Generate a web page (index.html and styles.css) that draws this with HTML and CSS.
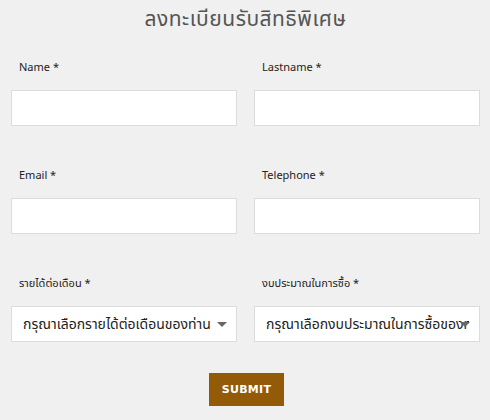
FILE: index.html
```html
<!DOCTYPE html>
<html lang="th">
<head>
<meta charset="utf-8">
<link rel="stylesheet" href="styles.css">
</head>
<body>
<div class="page">
  <h1 class="title">ลงทะเบียนรับสิทธิพิเศษ</h1>
  <form class="form">
    <div class="field">
      <label class="label">Name *</label>
      <div class="input"></div>
    </div>
    <div class="field">
      <label class="label">Lastname *</label>
      <div class="input"></div>
    </div>
    <div class="field">
      <label class="label">Email *</label>
      <div class="input"></div>
    </div>
    <div class="field">
      <label class="label">Telephone *</label>
      <div class="input"></div>
    </div>
    <div class="field">
      <label class="label">รายได้ต่อเดือน *</label>
      <div class="input select"><span class="select-text">กรุณาเลือกรายได้ต่อเดือนของท่าน</span><span class="arrow"></span></div>
    </div>
    <div class="field">
      <label class="label">งบประมาณในการซื้อ *</label>
      <div class="input select"><span class="select-text">กรุณาเลือกงบประมาณในการซื้อของท่าน</span><span class="arrow"></span></div>
    </div>
  </form>
  <div class="actions">
    <button class="submit" type="button">SUBMIT</button>
  </div>
</div>
</body>
</html>
```
FILE: styles.css
```css
html, body {
  margin: 0;
  padding: 0;
  background: #f0f0f0;
}
body {
  font-family: "Noto Sans", "Noto Sans Thai", "DejaVu Sans", sans-serif;
  color: #222;
}
.page {
  width: 469px;
  margin: 0 0 0 11px;
}
.title {
  margin: 0;
  padding-top: 5px;
  height: 60px;
  box-sizing: border-box;
  text-align: center;
  font-size: 21px;
  font-weight: 400;
  line-height: 26px;
  color: #555;
  letter-spacing: 0.5px;
}
.form {
  display: grid;
  grid-template-columns: 226px 226px;
  column-gap: 17px;
  row-gap: 42px;
}
.field {
  display: flex;
  flex-direction: column;
}
.label {
  display: block;
  height: 30px;
  margin-left: 8px;
  font-size: 11px;
  line-height: 14px;
  color: #222;
}
.input {
  box-sizing: border-box;
  height: 36px;
  background: #fff;
  border: 1px solid #dcdcdc;
}
.select {
  display: flex;
  align-items: center;
  padding: 0 10px 0 11px;
  position: relative;
  overflow: hidden;
}
.select-text {
  white-space: nowrap;
  overflow: hidden;
  font-size: 14px;
  color: #222;
  flex: 1;
}
.arrow {
  position: absolute;
  right: 9px;
  top: 15px;
  width: 0;
  height: 0;
  border-left: 5px solid transparent;
  border-right: 5px solid transparent;
  border-top: 5px solid #666;
}
.actions {
  display: flex;
  justify-content: center;
  padding-top: 31px;
}
.submit {
  width: 75px;
  height: 33px;
  margin-left: 2px;
  background: #935b07;
  color: #fff;
  border: 0;
  font-family: "DejaVu Sans", sans-serif;
  font-weight: 700;
  font-size: 11px;
  letter-spacing: 0.3px;
  padding: 0;
}
```
